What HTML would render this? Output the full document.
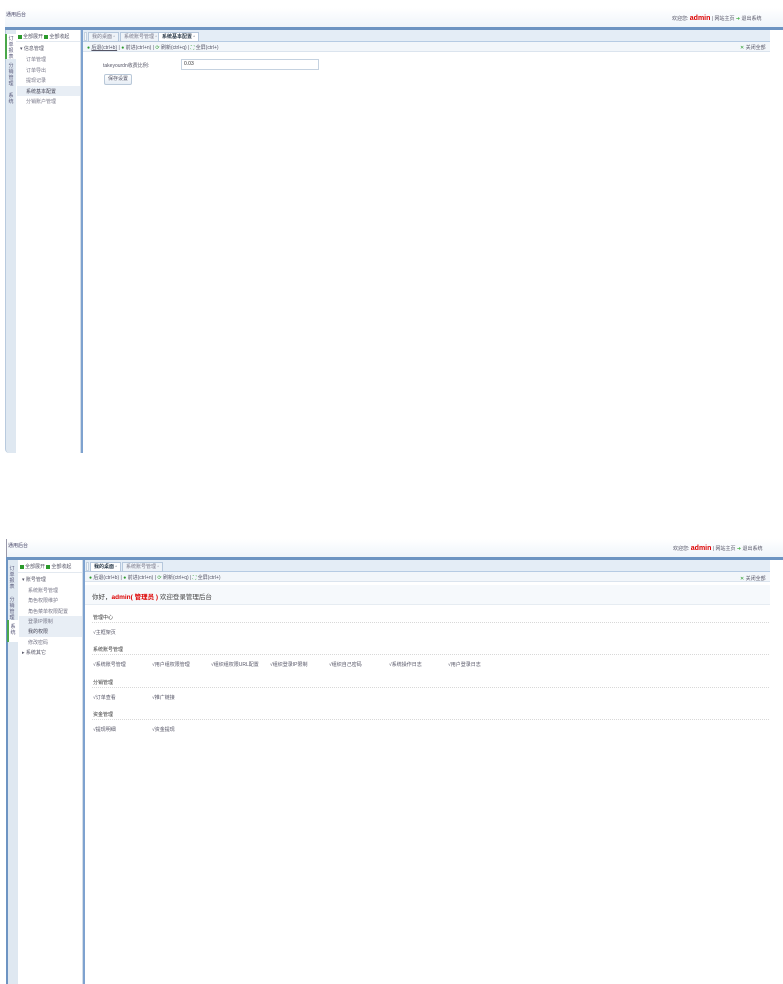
<!DOCTYPE html>
<html><head><meta charset="utf-8"><style>
*{margin:0;padding:0;box-sizing:border-box}
body{width:783px;height:984px;background:#fff;position:relative;overflow:hidden;font-family:"Liberation Sans","Noto Sans CJK SC",sans-serif;font-size:5px;color:#556}
.a{position:absolute;white-space:nowrap}
.hdr{background:linear-gradient(#fff,#eef4fa);}
.bl{background:#6d94c2}
.lc{background:#dfe8f1;border-left:1px solid #b8cade}
.tree{background:#fff;border-right:1px solid #d3dde8}
.sep{background:#7ea2cf}
.tabbar{background:#e4edf6;border-bottom:1px solid #b6cbe3}
.tab{border:1px solid #b5c7dc;background:#eef3f8;color:#778;line-height:9px;padding:0 3px;height:10px}
.tab.on{background:#fff;color:#234;font-weight:bold}
.tb{background:#f2f6fa;border-bottom:1px solid #dbe4ee}
.g{color:#2a9a2a}
.vt{width:10px;text-align:center;line-height:6px;color:#557}
.dl{border-top:1px dotted #d8d8d8;height:0}
.hl{background:#e8eef5}
.sq{display:inline-block;width:4px;height:4px;background:#2c9a2c;margin-right:1px;vertical-align:middle}
</style></head><body>

<!-- TOP SCREEN -->
<div class="a hdr" style="left:5px;top:8px;width:778px;height:20px"></div>
<div class="a" style="left:6px;top:11px;color:#446">通用后台</div>
<div class="a" style="left:672px;top:15px;color:#556">欢迎您: <b style="color:#d00;font-size:7px">admin</b> | 网站主页 <span style="color:#3a3">➜</span> 退出系统</div>
<div class="a bl" style="left:5px;top:27px;width:778px;height:3px"></div>
<div class="a lc" style="left:5px;top:30px;width:11px;height:423px;border-bottom-left-radius:4px"></div>
<div class="a" style="left:5px;top:34px;width:11px;height:25px;background:#fff;border-left:2px solid #4aa84a"></div>
<div class="a vt" style="left:6px;top:36px">订<br>单<br>报<br>表</div>
<div class="a vt" style="left:6px;top:63px">分<br>销<br>管<br>理</div>
<div class="a vt" style="left:6px;top:93px">系<br>统</div>
<div class="a tree" style="left:16px;top:30px;width:65px;height:423px"></div>
<div class="a" style="left:18px;top:33px"><span class="sq"></span>全部展开 <span class="sq"></span>全部收起</div>
<div class="a" style="left:16px;top:41px;width:64px;height:1px;background:#e3e9f0"></div>
<div class="a" style="left:20px;top:45px">▾ 信息管理</div>
<div class="a" style="left:26px;top:56px;color:#778">订单管理</div>
<div class="a" style="left:26px;top:67px;color:#778">订单导出</div>
<div class="a" style="left:26px;top:77px;color:#778">提现记录</div>
<div class="a hl" style="left:17px;top:86px;width:63px;height:10px"></div>
<div class="a" style="left:26px;top:88px;color:#445">系统基本配置</div>
<div class="a" style="left:26px;top:98px;color:#778">分销账户管理</div>
<div class="a sep" style="left:81px;top:30px;width:2px;height:423px"></div>
<div class="a tabbar" style="left:83px;top:30px;width:687px;height:12px"></div>
<div class="a" style="left:84px;top:32px;width:3px;height:9px;border:1px solid #c5d2e0;background:#f4f7fa"></div>
<div class="a tab" style="left:88px;top:32px">我的桌面 ▫</div>
<div class="a tab" style="left:120px;top:32px">系统账号管理 ▫</div>
<div class="a tab on" style="left:158px;top:32px">系统基本配置 ▫</div>
<div class="a tb" style="left:83px;top:42px;width:687px;height:10px"></div>
<div class="a" style="left:87px;top:44px"><span class="g">●</span> <u>后退(ctrl+b)</u> | <span class="g">●</span> 前进(ctrl+n) | <span class="g">⟳</span> 刷新(ctrl+q) | <span class="g">⛶</span> 全屏(ctrl+)</div>
<div class="a" style="left:740px;top:44px"><span class="g">✕</span> 关闭全部</div>
<div class="a" style="left:103px;top:62px">takeyourdn收费比例:</div>
<div class="a" style="left:181px;top:59px;width:138px;height:11px;border:1px solid #c5d2e0;padding-left:2px;line-height:9px;color:#333">0.03</div>
<div class="a" style="left:104px;top:74px;width:28px;height:11px;border:1px solid #b9c8d8;background:linear-gradient(#fff,#e6edf5);border-radius:2px;text-align:center;line-height:9px">保存设置</div>

<!-- BOTTOM SCREEN -->
<div class="a hdr" style="left:6px;top:539px;width:777px;height:19px;border-left:1px solid #99a"></div>
<div class="a" style="left:8px;top:542px;color:#446">通用后台</div>
<div class="a" style="left:673px;top:545px;color:#556">欢迎您: <b style="color:#d00;font-size:7px">admin</b> | 网站主页 <span style="color:#3a3">➜</span> 退出系统</div>
<div class="a bl" style="left:6px;top:557px;width:777px;height:3px"></div>
<div class="a lc" style="left:6px;top:560px;width:12px;height:424px;border-left:2px solid #6d94c2"></div>
<div class="a vt" style="left:7px;top:566px">订<br>单<br>报<br>表</div>
<div class="a vt" style="left:7px;top:597px">分<br>销<br>管<br>理</div>
<div class="a" style="left:7px;top:620px;width:11px;height:22px;background:#fff;border-left:2px solid #4aa84a"></div>
<div class="a vt" style="left:8px;top:624px">系<br>统</div>
<div class="a tree" style="left:18px;top:560px;width:65px;height:424px"></div>
<div class="a" style="left:20px;top:563px"><span class="sq"></span>全部展开 <span class="sq"></span>全部收起</div>
<div class="a" style="left:18px;top:572px;width:64px;height:1px;background:#e3e9f0"></div>
<div class="a" style="left:22px;top:576px">▾ 账号管理</div>
<div class="a" style="left:28px;top:587px;color:#778">系统账号管理</div>
<div class="a" style="left:28px;top:597px;color:#778">角色权限维护</div>
<div class="a" style="left:28px;top:608px;color:#778">角色菜单权限配置</div>
<div class="a hl" style="left:19px;top:616px;width:63px;height:21px"></div>
<div class="a" style="left:28px;top:618px;color:#778">登录IP限制</div>
<div class="a" style="left:28px;top:628px;color:#445">我的权限</div>
<div class="a" style="left:28px;top:639px;color:#778">修改密码</div>
<div class="a" style="left:22px;top:649px">▸ 系统其它</div>
<div class="a sep" style="left:83px;top:560px;width:2px;height:424px"></div>
<div class="a tabbar" style="left:85px;top:560px;width:685px;height:12px"></div>
<div class="a" style="left:86px;top:562px;width:3px;height:9px;border:1px solid #c5d2e0;background:#f4f7fa"></div>
<div class="a tab on" style="left:90px;top:562px">我的桌面 ▫</div>
<div class="a tab" style="left:122px;top:562px">系统账号管理 ▫</div>
<div class="a tb" style="left:85px;top:572px;width:685px;height:10px"></div>
<div class="a" style="left:89px;top:574px"><span class="g">●</span> 后退(ctrl+b) | <span class="g">●</span> 前进(ctrl+n) | <span class="g">⟳</span> 刷新(ctrl+q) | <span class="g">⛶</span> 全屏(ctrl+)</div>
<div class="a" style="left:740px;top:575px"><span class="g">✕</span> 关闭全部</div>
<div class="a" style="left:85px;top:585px;width:685px;height:20px;background:#f6f9fc;border-bottom:1px solid #e6ecf2"></div>
<div class="a" style="left:92px;top:591px;font-size:6.5px;color:#444">你好，<b style="color:#d00">admin( 管理员 )</b> 欢迎登录管理后台</div>
<div class="a" style="left:93px;top:614px;color:#333">管理中心</div>
<div class="a dl" style="left:92px;top:622px;width:677px"></div>
<div class="a" style="left:93px;top:629px">√主框架页</div>
<div class="a" style="left:93px;top:646px;color:#333">系统账号管理</div>
<div class="a dl" style="left:92px;top:654px;width:677px"></div>
<div class="a" style="left:93px;top:661px">√系统账号管理</div>
<div class="a" style="left:152px;top:661px">√用户组权限管理</div>
<div class="a" style="left:211px;top:661px">√组织组权限URL配置</div>
<div class="a" style="left:270px;top:661px">√组织登录IP限制</div>
<div class="a" style="left:329px;top:661px">√组织自己密码</div>
<div class="a" style="left:389px;top:661px">√系统操作日志</div>
<div class="a" style="left:448px;top:661px">√用户登录日志</div>
<div class="a" style="left:93px;top:679px;color:#333">分销管理</div>
<div class="a dl" style="left:92px;top:687px;width:677px"></div>
<div class="a" style="left:93px;top:694px">√订单查看</div>
<div class="a" style="left:152px;top:694px">√推广链接</div>
<div class="a" style="left:93px;top:711px;color:#333">资金管理</div>
<div class="a dl" style="left:92px;top:719px;width:677px"></div>
<div class="a" style="left:93px;top:726px">√提现明细</div>
<div class="a" style="left:152px;top:726px">√资金提现</div>
</body></html>
